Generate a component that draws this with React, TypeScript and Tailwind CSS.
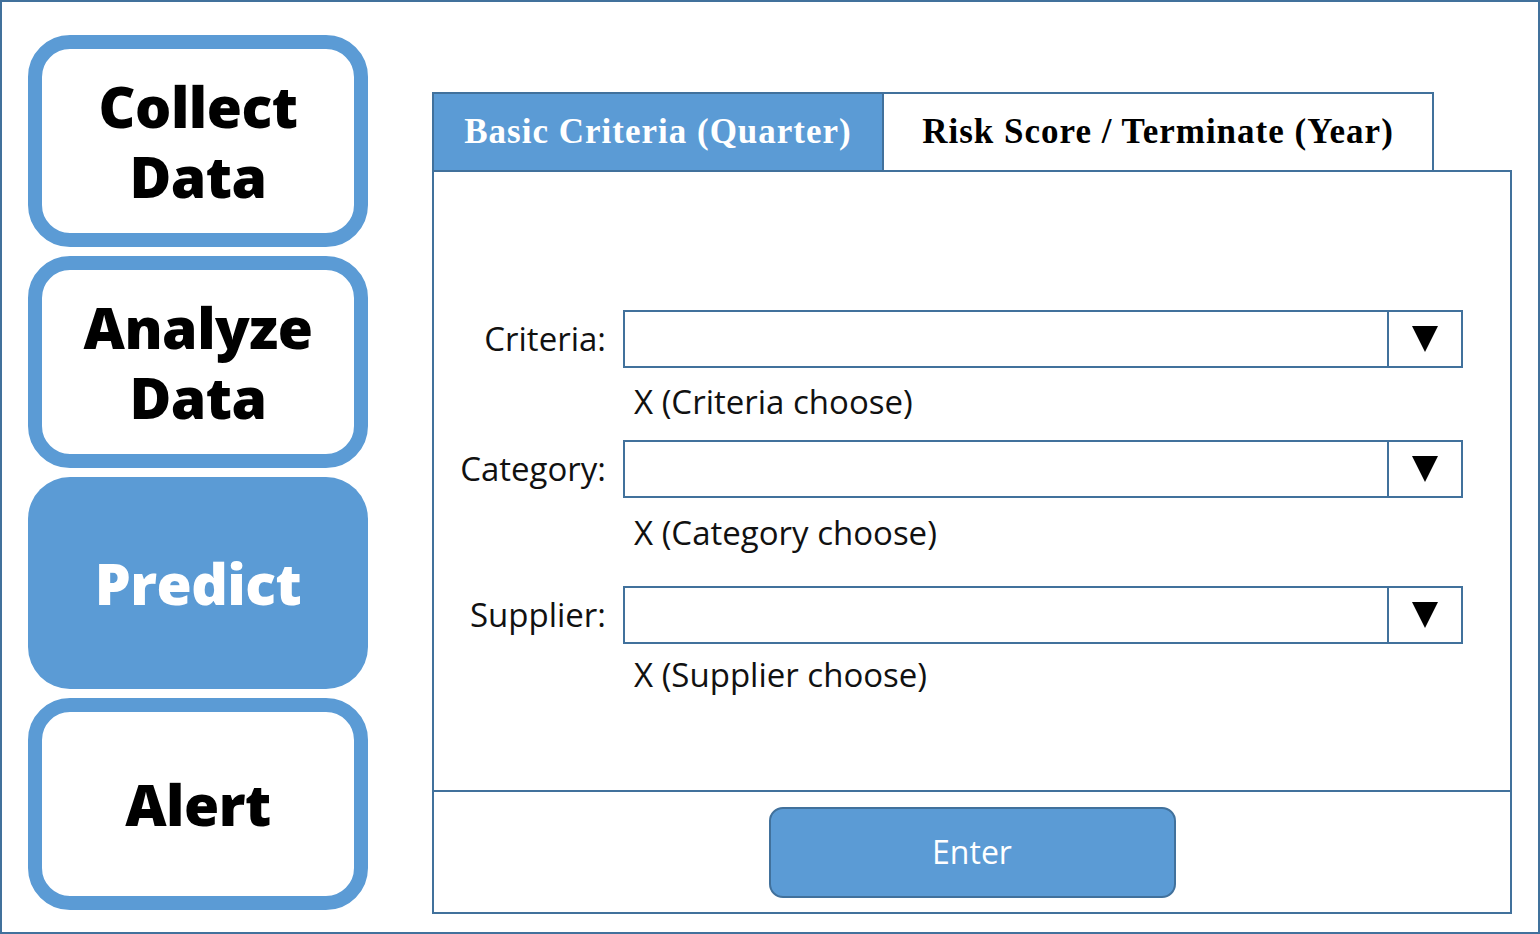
import React from "react";

const sans = { fontFamily: '"Open Sans", "Noto Sans", sans-serif' };

function SideButton({ lines, active }: { lines: string[]; active?: boolean }) {
  return (
    <div
      className={
        "h-[212px] w-[340px] rounded-[42px] flex flex-col items-center justify-center " +
        (active
          ? "bg-[#5B9BD5] text-white"
          : "border-[14px] border-[#5B9BD5] bg-white text-black")
      }
    >
      <div
        className="text-center text-[57px] font-extrabold leading-[70px] tracking-[-0.5px]"
        style={sans}
      >
        {lines.map((l, i) => (
          <React.Fragment key={l}>
            {i > 0 && <br />}
            {l}
          </React.Fragment>
        ))}
      </div>
    </div>
  );
}

function Select({
  label,
  helper,
  helperClass,
}: {
  label: string;
  helper: string;
  helperClass: string;
}) {
  return (
    <div className="flex flex-col">
      <div className="flex items-center">
        <div className="w-[172px] text-right text-[33px] text-[#111] leading-[40px]" style={sans}>
          {label}
        </div>
        <div className="ml-[17px] flex h-[58px] w-[840px] border-2 border-[#41719C] bg-white">
          <div className="flex-1" />
          <div className="flex w-[74px] items-center justify-center border-l-2 border-[#41719C]">
            <svg width="28" height="28" viewBox="0 0 28 28">
              <polygon points="1,1 27,1 14,27" fill="#000" />
            </svg>
          </div>
        </div>
      </div>
      <div className={"ml-[200px] text-[33px] leading-[40px] text-[#111] " + helperClass} style={sans}>
        {helper}
      </div>
    </div>
  );
}

export default function App() {
  return (
    <div className="flex h-[934px] w-[1540px] border-2 border-[#41719C] bg-white">
      <div className="ml-[26px] mt-[33px] flex flex-col gap-[9px]">
        <SideButton lines={["Collect", "Data"]} />
        <SideButton lines={["Analyze", "Data"]} />
        <SideButton lines={["Predict"]} active />
        <SideButton lines={["Alert"]} />
      </div>
      <div className="ml-[64px] mt-[90px] flex w-[1080px] flex-col">
        <div className="flex h-[78px]">
          <div
            className="flex w-[452px] items-center justify-center border-2 border-b-0 border-[#41719C] bg-[#5B9BD5] text-[35px] font-bold tracking-[1px] text-white"
            style={{ fontFamily: '"Liberation Serif", serif' }}
          >
            Basic Criteria (Quarter)
          </div>
          <div
            className="flex w-[550px] items-center justify-center border-2 border-b-0 border-l-0 border-[#41719C] bg-white text-[35px] font-bold tracking-[1px] text-black"
            style={{ fontFamily: '"Liberation Serif", serif' }}
          >
            Risk Score / Terminate (Year)
          </div>
        </div>
        <div className="flex h-[744px] flex-col border-2 border-[#41719C]">
          <div className="flex h-[618px] flex-col pt-[138px]">
            <Select label="Criteria:" helper="X (Criteria choose)" helperClass="mt-[14px]" />
            <div className="h-[18px]" />
            <Select label="Category:" helper="X (Category choose)" helperClass="mt-[15px]" />
            <div className="h-[33px]" />
            <Select label="Supplier:" helper="X (Supplier choose)" helperClass="mt-[11px]" />
          </div>
          <div className="flex flex-1 items-center justify-center border-t-2 border-[#41719C]">
            <div
              className="flex h-[91px] w-[407px] items-center justify-center rounded-[14px] border-2 border-[#41719C] bg-[#5B9BD5] text-[32px] text-white"
              style={sans}
            >
              Enter
            </div>
          </div>
        </div>
      </div>
    </div>
  );
}
